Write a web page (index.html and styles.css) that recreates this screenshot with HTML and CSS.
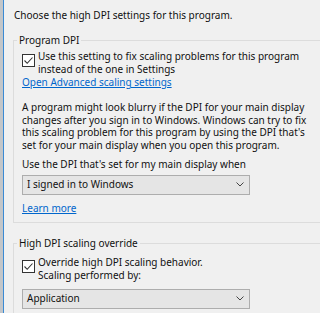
FILE: index.html
```html
<!DOCTYPE html>
<html lang="en">
<head>
    <meta charset="UTF-8">
    <title>High DPI settings</title>
    <link rel="stylesheet" href="styles.css">
</head>
<body>
    <div class="screen">
        <div class="behind"></div>
        <div class="dialog">
            <p class="intro">Choose the high DPI settings for this program.</p>

            <!-- Program DPI group -->
            <fieldset class="group group-program">
                <legend>Program DPI</legend>
                <label class="check-row">
                    <span class="checkbox">
                        <svg width="11" height="11" viewBox="0 0 11 11" fill="none">
                            <path d="M1.5 5.5L4.2 8.3L9.5 2.5" stroke="#333" stroke-width="1.1"/>
                        </svg>
                    </span>
                    <span class="check-text">Use this setting to fix scaling problems for this program instead of the one in Settings</span>
                </label>
                <a class="link" href="#">Open Advanced scaling settings</a>
                <p class="note">A program might look blurry if the DPI for your main display changes after you sign in to Windows. Windows can try to fix this scaling problem for this program by using the DPI that's set for your main display when you open this program.</p>
                <div class="field-label">Use the DPI that's set for my main display when</div>
                <div class="combo">
                    <span class="combo-value">I signed in to Windows</span>
                    <svg class="chevron" width="8" height="5" viewBox="0 0 8 5" fill="none">
                        <path d="M0.5 0.5L4 4L7.5 0.5" stroke="#444" stroke-width="1"/>
                    </svg>
                </div>
                <a class="link learn" href="#">Learn more</a>
            </fieldset>

            <!-- High DPI scaling override group -->
            <fieldset class="group group-override">
                <legend>High DPI scaling override</legend>
                <label class="check-row">
                    <span class="checkbox">
                        <svg width="11" height="11" viewBox="0 0 11 11" fill="none">
                            <path d="M1.5 5.5L4.2 8.3L9.5 2.5" stroke="#333" stroke-width="1.1"/>
                        </svg>
                    </span>
                    <span class="check-text">Override high DPI scaling behavior.<br>Scaling performed by:</span>
                </label>
                <div class="combo">
                    <span class="combo-value">Application</span>
                    <svg class="chevron" width="8" height="5" viewBox="0 0 8 5" fill="none">
                        <path d="M0.5 0.5L4 4L7.5 0.5" stroke="#444" stroke-width="1"/>
                    </svg>
                </div>
            </fieldset>
        </div>
    </div>
</body>
</html>
```

FILE: styles.css
```css
html, body {
    margin: 0;
    padding: 0;
    height: 100%;
    overflow: hidden;
}

body {
    background-color: #f0f0f0;
    font-family: "Noto Sans", "Open Sans", sans-serif;
    font-size: 10px;
    line-height: 13px;
    color: #111;
}

.screen {
    display: flex;
    height: 100%;
}

/* Sliver of the window behind plus the dialog's blue frame */
.behind {
    width: 3px;
    flex-shrink: 0;
    background-color: #c3c6c9;
    border-right: 1px solid #3a8ad4;
}

.dialog {
    flex: 1;
    padding: 9px 0 0 9px;
    min-width: 0;
    overflow: hidden;
}

.intro {
    margin: 0 0 12px 1px;
}

/* Group boxes (right edge runs out of the frame) */
.group {
    border: 1px solid #dcdcdc;
    margin: 0 -40px 0 0;
    padding: 0 0 7px 8px;
}

.group legend {
    padding: 0 2px;
    margin-left: -5px;
}

.group-override {
    margin-top: 14px;
    padding-bottom: 9px;
}

.check-row {
    display: flex;
    align-items: flex-start;
    gap: 3px;
    margin-top: 3px;
}

.group-override .check-row {
    margin-top: 6px;
}

.checkbox {
    width: 11px;
    height: 11px;
    flex-shrink: 0;
    border: 1px solid #333;
    background-color: #fff;
    margin-top: 4px;
    display: flex;
}

.check-text {
    max-width: 270px;
}

.link {
    display: block;
    color: #0066cc;
    text-decoration: underline;
    width: max-content;
}

.note {
    margin: 12px 0 0 0;
    max-width: 292px;
    line-height: 12.7px;
}

.field-label {
    margin-top: 6px;
}

.combo {
    width: 217px;
    height: 18px;
    border: 1px solid #adadad;
    background-color: #e5e5e5;
    margin-top: 4px;
    display: flex;
    align-items: center;
    justify-content: space-between;
    padding: 0 5px 0 4px;
}

.combo-value {
    color: #111;
}

.chevron {
    display: block;
}

.learn {
    margin-top: 7px;
}

.group-override .combo {
    margin-top: 7px;
}
```
